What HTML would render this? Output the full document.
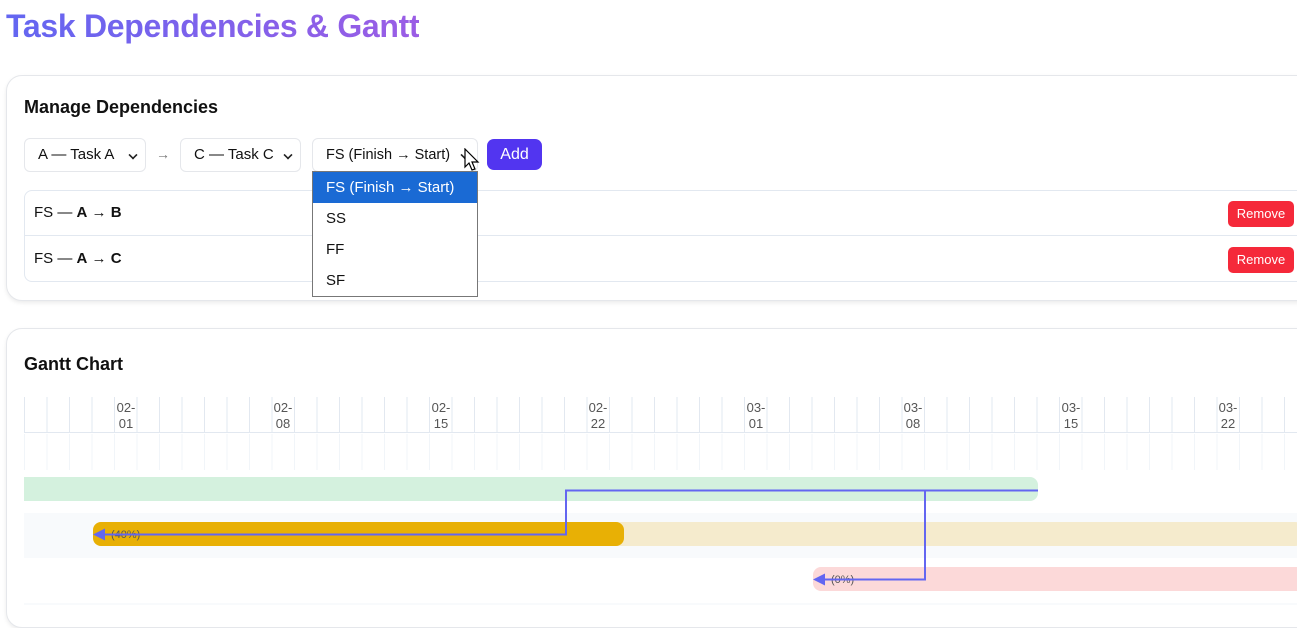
<!DOCTYPE html>
<html><head><meta charset="utf-8"><style>
*{box-sizing:border-box;margin:0;padding:0}
body{width:1297px;height:605px;overflow:hidden;background:#fff;font-family:"Liberation Sans","DejaVu Sans",sans-serif;color:#111;position:relative}
.abs{position:absolute}
h1{position:absolute;left:6px;top:8px;font-size:32px;font-weight:bold;background:linear-gradient(90deg,#6366f1,#9b5de5);-webkit-background-clip:text;background-clip:text;color:transparent;letter-spacing:-0.3px}
.card{position:absolute;left:6px;width:1320px;border:1px solid #e5e7eb;border-radius:16px;background:#fff;box-shadow:0 2px 4px rgba(0,0,0,.08)}
h2{position:absolute;left:24px;font-size:18px;font-weight:bold}
.sel{position:absolute;top:138px;height:34px;border:1px solid #e5e7eb;border-radius:6px;background:#fff;font-size:15px;line-height:32px;padding-left:13px}
.chev{position:absolute;right:8px;top:12px;width:8px;height:8px;border-right:2px solid #222;border-bottom:2px solid #222;transform:rotate(45deg) scale(.8)}
.row{position:absolute;left:24px;width:1290px;height:46px;font-size:15px;line-height:46px;padding-left:10px}
.rm{position:absolute;left:1228px;width:66px;height:26px;background:#f5293a;color:#fff;border-radius:5px;font-size:13px;text-align:center;line-height:26px}
.dd{position:absolute;left:312px;top:171px;width:166px;height:126px;border:1px solid #777;background:#fff;font-size:15px}
.dd div{height:31px;line-height:31px;padding-left:13px}
.lbl{position:absolute;top:400px;width:30px;text-align:center;font-size:13px;color:#555;line-height:16px}
</style></head><body>
<h1>Task Dependencies &amp; Gantt</h1>
<div class="card" style="top:75px;height:226px"></div>
<h2 style="top:97px">Manage Dependencies</h2>
<div class="sel" style="left:24px;width:122px">A — Task A<span class="chev"></span></div>
<div class="abs" style="left:156px;top:146px;font-size:14px;color:#777">→</div>
<div class="sel" style="left:180px;width:121px">C — Task C<span class="chev"></span></div>
<div class="sel" style="left:312px;width:166px;font-size:14.5px">FS (Finish → Start)<span class="chev"></span></div>
<div class="abs" style="left:487px;top:139px;width:55px;height:31px;background:#5235f0;border-radius:7px;color:#fff;font-size:16px;text-align:center;line-height:31px">Add</div>
<div class="abs" style="left:24px;top:190px;width:1290px;height:92px;border:1px solid #e2e8f0;border-radius:8px"></div>
<div class="abs" style="left:25px;top:235px;width:1290px;height:1px;background:#e2e8f0"></div>
<div class="row" style="top:190px">FS — <b>A</b> → <b>B</b></div>
<div class="row" style="top:236px">FS — <b>A</b> → <b>C</b></div>
<div class="rm" style="top:201px">Remove</div>
<div class="rm" style="top:247px">Remove</div>
<div class="dd"><div style="background:#1a6ad4;color:#fff">FS (Finish → Start)</div><div>SS</div><div>FF</div><div>SF</div></div>
<svg class="abs" style="left:463px;top:148px" width="18" height="26" viewBox="0 0 18 26"><path d="M2 1 L2 19 L6 15 L9 22 L12 21 L9 14 L15 14 Z" fill="#fff" stroke="#000" stroke-width="1.2"/></svg>

<div class="card" style="top:328px;height:300px"></div>
<h2 style="top:354px">Gantt Chart</h2>
<div class="abs" style="left:24px;top:397px;width:1273px;height:36px;background:repeating-linear-gradient(90deg,#e2e8f0 0 1px,transparent 1px 22.5px);border-bottom:1px solid #e2e8f0"></div>
<div class="abs" style="left:24px;top:434px;width:1273px;height:36px;background:repeating-linear-gradient(90deg,#f1f5f9 0 1px,transparent 1px 22.5px)"></div>
<div class="lbl" style="left:111px">02-<br>01</div>
<div class="lbl" style="left:268px">02-<br>08</div>
<div class="lbl" style="left:426px">02-<br>15</div>
<div class="lbl" style="left:583px">02-<br>22</div>
<div class="lbl" style="left:741px">03-<br>01</div>
<div class="lbl" style="left:898px">03-<br>08</div>
<div class="lbl" style="left:1056px">03-<br>15</div>
<div class="lbl" style="left:1213px">03-<br>22</div>
<div class="abs" style="left:24px;top:477px;width:1014px;height:24px;background:#d4f1de;border-radius:0 8px 8px 0"></div>
<div class="abs" style="left:24px;top:513px;width:1273px;height:45px;background:#f8fafc"></div>
<div class="abs" style="left:93px;top:522px;width:1210px;height:24px;background:#f5ebcd;border-radius:8px"></div>
<div class="abs" style="left:93px;top:522px;width:531px;height:24px;background:#e8b005;border-radius:8px"></div>
<div class="abs" style="left:813px;top:567px;width:500px;height:24px;background:#fcd9d9;border-radius:8px"></div>
<div class="abs" style="left:24px;top:603px;width:1273px;height:2px;background:#f8fafc"></div>
<div class="abs" style="left:111px;top:529px;font-size:11px;color:#555">(40%)</div>
<div class="abs" style="left:831px;top:574px;font-size:11px;color:#555">(0%)</div>
<svg class="abs" style="left:0;top:0" width="1297" height="605">
<path d="M1038 490.5 H566 V534.5 H100" fill="none" stroke="#6366f1" stroke-width="2"/>
<path d="M925 490.5 V579.5 H820" fill="none" stroke="#6366f1" stroke-width="2"/>
<path d="M93 534.5 L105 528.5 L105 540.5 Z" fill="#6366f1"/>
<path d="M813 579.5 L825 573.5 L825 585.5 Z" fill="#6366f1"/>
</svg>
</body></html>
